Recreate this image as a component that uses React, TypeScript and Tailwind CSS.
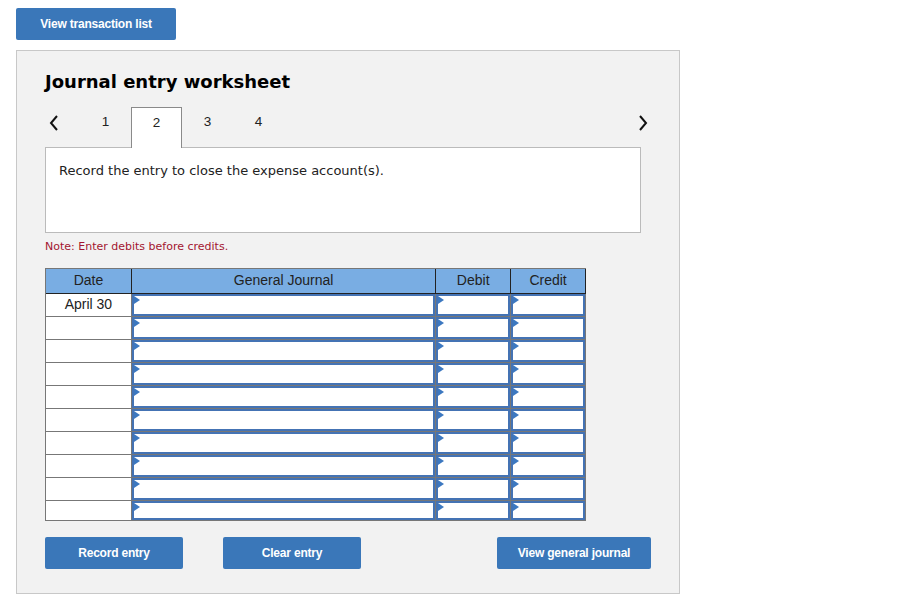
import React from "react";

const verdana = "font-['DejaVu_Sans',Verdana,sans-serif]";
const arial = "font-['Liberation_Sans',Arial,sans-serif]";

const tabs = [1, 2, 3, 4];
const rows = Array.from({ length: 10 }, (_, i) => (i === 0 ? "April 30" : ""));

// small blue marker in the top-left of each entry cell
const Marker = () => (
  <svg className="absolute left-0 top-0" width="6" height="8" viewBox="0 0 6 8">
    <path d="M0 0 L6 4 L0 8 Z" fill="#3c78c0" />
  </svg>
);

const EntryCell = ({ w, h }: { w: string; h: string }) => (
  <div className={`${w} ${h} border-r border-b border-[#777] bg-white`}>
    <div className="relative h-full border-2 border-[#4473b4] bg-white">
      <Marker />
    </div>
  </div>
);

const BlueButton = ({ label, w }: { label: string; w: string }) => (
  <button
    className={`${w} shrink-0 h-[32px] rounded-[2px] bg-[#3a77b9] text-white text-[12px] font-bold ${arial} tracking-[-0.2px]`}
  >
    {label}
  </button>
);

export default function App() {
  return (
    <div className="w-[900px] h-[608px] bg-white pt-[8px] pl-[16px]">
      <BlueButton label="View transaction list" w="w-[160px]" />

      <div className="mt-[10px] w-[664px] h-[544px] border border-[#c8c8c8] bg-[#f2f2f2] pl-[28px] pr-[38px]">
        <h1 className={`mt-[19px] text-[18px] font-bold text-black leading-[24px] ${verdana}`}>
          Journal entry worksheet
        </h1>

        {/* tab strip */}
        <div className="mt-[13px] -mr-[7px] flex items-end h-[41px] relative z-10">
          <div className="w-[35px] h-full flex items-center justify-start pl-[4px] pb-[10px]">
            <svg width="10" height="16" viewBox="0 0 10 16">
              <path d="M8 1 L2 8 L8 15" stroke="#111" strokeWidth="2" fill="none" />
            </svg>
          </div>
          {tabs.map((t) => (
            <div
              key={t}
              className={`w-[51px] h-full flex items-center justify-center pb-[10px] text-[13.5px] text-[#222] ${arial} ${
                t === 2 ? "bg-white border border-b-0 border-[#8a8a8a]" : ""
              }`}
            >
              {t}
            </div>
          ))}
          <div className="flex-1 h-full flex items-center justify-end pb-[10px]">
            <svg width="10" height="16" viewBox="0 0 10 16">
              <path d="M2 1 L8 8 L2 15" stroke="#111" strokeWidth="2" fill="none" />
            </svg>
          </div>
        </div>

        <div className="-mt-[1px] h-[86px] border border-[#bbbbbb] bg-white px-[13px] pt-[13px]">
          <p className={`text-[13px] text-[#222] ${verdana}`}>
            Record the entry to close the expense account(s).
          </p>
        </div>

        <p className={`mt-[6px] text-[11px] text-[#a31530] ${verdana}`}>
          Note: Enter debits before credits.
        </p>

        {/* journal table */}
        <div className={`mt-[12px] w-[541px] ${arial}`}>
          <div className="flex h-[26px] bg-[#79ade3] border-t border-l border-[#777] text-[14px] text-[#222]">
            <div className="w-[86px] flex items-center justify-center border-r border-b border-[#222]">Date</div>
            <div className="w-[305px] flex items-center justify-center border-r border-b border-[#222]">
              General Journal
            </div>
            <div className="w-[75px] flex items-center justify-center border-r border-b border-[#222]">Debit</div>
            <div className="w-[75px] flex items-center justify-center border-r border-b border-[#222]">Credit</div>
          </div>
          {rows.map((d, i) => {
            const h = i === rows.length - 1 ? "h-[20px]" : "h-[23px]";
            return (
              <div key={i} className="flex border-l border-[#777]">
                <div
                  className={`w-[86px] ${h} border-r border-b border-[#777] bg-white flex items-center justify-center text-[14px] text-[#222]`}
                >
                  {d}
                </div>
                <EntryCell w="w-[305px]" h={h} />
                <EntryCell w="w-[75px]" h={h} />
                <EntryCell w="w-[75px]" h={h} />
              </div>
            );
          })}
        </div>

        <div className="mt-[16px] flex">
          <BlueButton label="Record entry" w="w-[138px]" />
          <div className="w-[40px] shrink-0" />
          <BlueButton label="Clear entry" w="w-[138px]" />
          <div className="w-[136px] shrink-0" />
          <BlueButton label="View general journal" w="w-[154px]" />
        </div>
      </div>
    </div>
  );
}
